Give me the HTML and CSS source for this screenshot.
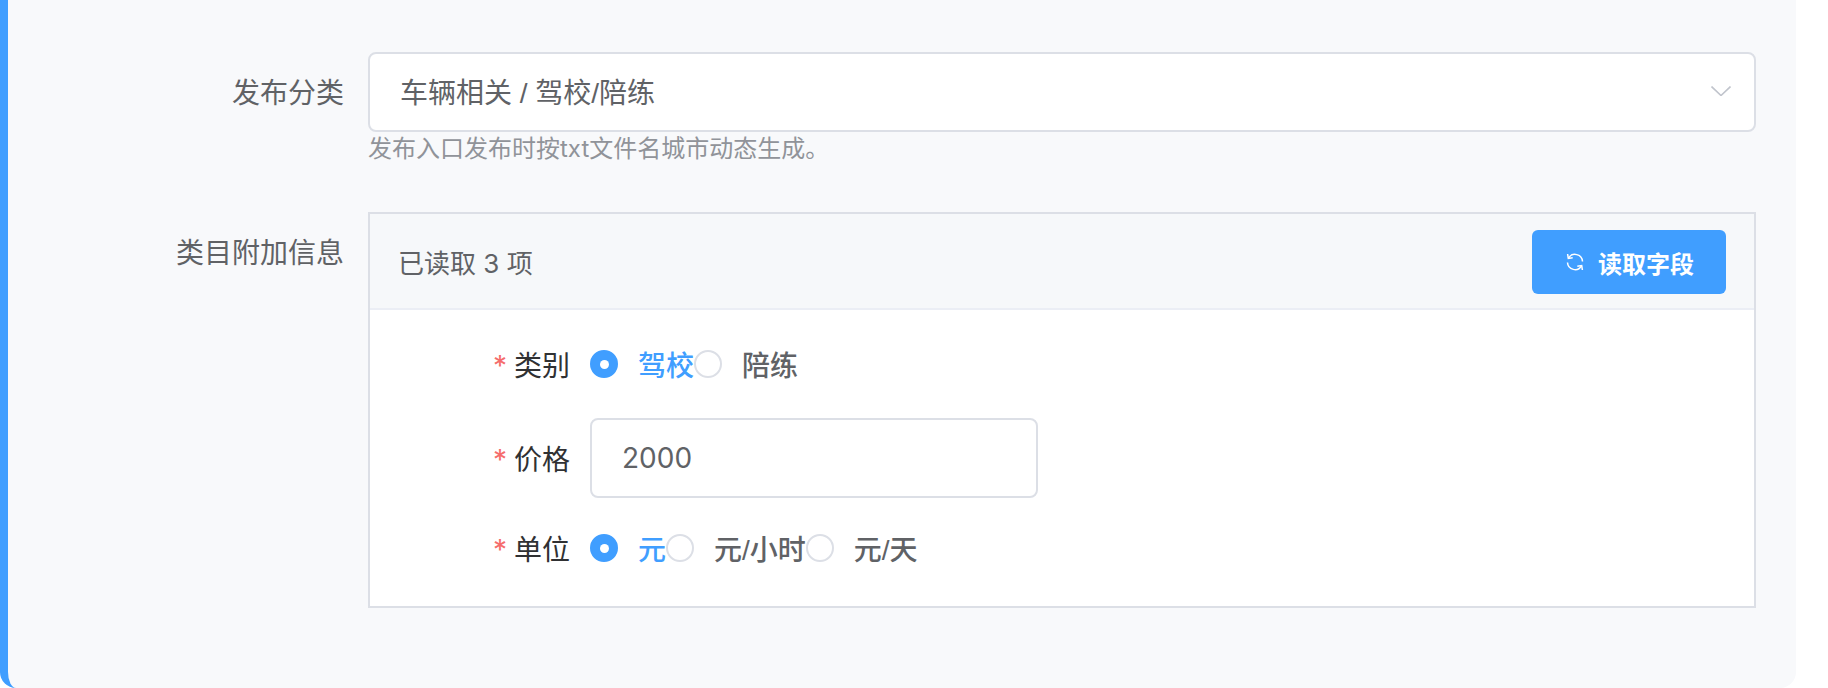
FILE: index.html
```html
<!DOCTYPE html>
<html lang="zh-CN">

<head>
    <meta charset="UTF-8">
    <title>发布分类</title>
    <link rel="stylesheet" href="styles.css">
</head>

<body>
    <div class="panel">
        <div class="form-row">
            <label class="row-label">发布分类</label>
            <div class="row-content">
                <div class="select-box">
                    <span>车辆相关 / 驾校/陪练</span>
                    <svg class="chevron" width="20" height="10" viewBox="0 0 20 10">
                        <path d="M0.5 0.5 L10 9.5 L19.5 0.5" />
                    </svg>
                </div>
                <p class="hint">发布入口发布时按txt文件名城市动态生成。</p>
            </div>
        </div>

        <div class="form-row extra-row">
            <label class="row-label">类目附加信息</label>
            <div class="row-content">
                <div class="extra-box">
                    <div class="extra-head">
                        <span>已读取 3 项</span>
                        <button class="read-btn">
                            <svg class="refresh" width="20" height="20" viewBox="0 0 20 20">
                                <path d="M17.5 9.5 A7.5 7.5 0 0 0 3.5 6.2" />
                                <path d="M2.6 2 L3.3 6.4 L7.7 5.7" />
                                <path d="M2.5 10.5 A7.5 7.5 0 0 0 16.5 13.8" />
                                <path d="M17.4 18 L16.7 13.6 L12.3 14.3" />
                            </svg>
                            <span>读取字段</span>
                        </button>
                    </div>
                    <div class="extra-body">
                        <div class="field field-type">
                            <span class="field-label">类别</span>
                            <div class="radio-group">
                                <span class="radio checked"><i></i><b>驾校</b></span>
                                <span class="radio"><i></i><b>陪练</b></span>
                            </div>
                        </div>
                        <div class="field field-price">
                            <span class="field-label">价格</span>
                            <div class="text-input">2000</div>
                        </div>
                        <div class="field field-unit">
                            <span class="field-label">单位</span>
                            <div class="radio-group">
                                <span class="radio checked"><i></i><b>元</b></span>
                                <span class="radio"><i></i><b>元/小时</b></span>
                                <span class="radio"><i></i><b>元/天</b></span>
                            </div>
                        </div>
                    </div>
                </div>
            </div>
        </div>
    </div>
</body>

</html>
```

FILE: styles.css
```css
* {
    box-sizing: border-box;
}

html,
body {
    margin: 0;
    height: 100%;
    overflow: hidden;
    background-color: #ffffff;
}

body {
    font-family: Inter, "Noto Sans CJK SC", sans-serif;
    font-size: 28px;
    color: #606266;
}

.panel {
    width: 1796px;
    height: 688px;
    padding: 52px 40px 0 0;
    background-color: #f8f9fb;
    border-left: 8px solid #409eff;
    border-radius: 0 0 16px 16px;
}

.form-row {
    display: flex;
}

.extra-row {
    margin-top: 51px;
}

.row-label {
    width: 336px;
    height: 80px;
    line-height: 82px;
    text-align: right;
    flex-shrink: 0;
}

.row-content {
    flex: 1;
    margin-left: 24px;
}

.select-box {
    display: flex;
    align-items: center;
    justify-content: space-between;
    height: 80px;
    padding: 0 23px 2px 30px;
    font-family: "Liberation Sans", "Noto Sans CJK SC", sans-serif;
    background-color: #ffffff;
    border: 2px solid #dcdfe6;
    border-radius: 8px;
}

.chevron path {
    fill: none;
    stroke: #c0c4cc;
    stroke-width: 1.6;
}

.hint {
    margin: 5px 0 0;
    font-size: 24px;
    line-height: 24px;
    color: #909399;
}

.extra-box {
    height: 396px;
    border: 2px solid #dcdfe6;
    background-color: #ffffff;
}

.extra-head {
    display: flex;
    align-items: center;
    justify-content: space-between;
    height: 96px;
    padding: 0 28px 0 28px;
    font-size: 26px;
    background-color: #f6f8fa;
    border-bottom: 2px solid #ebeef5;
}

.read-btn {
    display: flex;
    align-items: center;
    gap: 13px;
    width: 194px;
    height: 64px;
    margin-top: 2px;
    padding: 0 0 0 33px;
    border: none;
    border-radius: 6px;
    background-color: #409eff;
    color: #ffffff;
    font-family: inherit;
    font-size: 24px;
    font-weight: 600;
}

.refresh path {
    fill: none;
    stroke: #ffffff;
    stroke-width: 1.5;
}

.extra-body {
    padding-top: 26px;
}

.field {
    display: flex;
    align-items: center;
}

.field-label {
    width: 200px;
    margin-right: 20px;
    text-align: right;
    color: #303133;
    flex-shrink: 0;
}

.field-label::before {
    content: "*";
    margin-right: 7px;
    color: #f56c6c;
}

.field-type {
    height: 56px;
}

.field-price {
    margin-top: 26px;
    height: 80px;
}

.field-unit {
    margin-top: 22px;
    height: 56px;
}

.radio-group {
    display: flex;
    align-items: center;
    font-family: "Liberation Sans", "Noto Sans CJK SC", sans-serif;
}

.radio {
    display: flex;
    align-items: center;
}

.radio i {
    display: flex;
    align-items: center;
    justify-content: center;
    width: 28px;
    height: 28px;
    margin-right: 20px;
    background-color: #ffffff;
    border: 2px solid #dcdfe6;
    border-radius: 50%;
}

.radio b {
    font-weight: 500;
}

.radio.checked i {
    background-color: #409eff;
    border-color: #409eff;
}

.radio.checked i::after {
    content: "";
    width: 9px;
    height: 9px;
    background-color: #ffffff;
    border-radius: 50%;
}

.radio.checked b {
    color: #409eff;
}

.text-input {
    display: flex;
    align-items: center;
    width: 448px;
    height: 80px;
    padding-left: 30px;
    background-color: #ffffff;
    border: 2px solid #dcdfe6;
    border-radius: 8px;
}
```
